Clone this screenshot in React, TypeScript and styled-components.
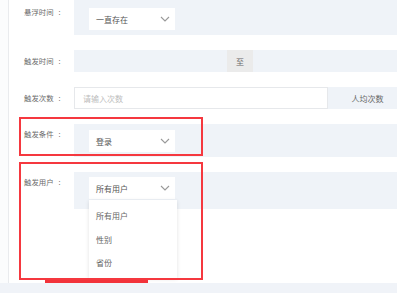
import styled, { createGlobalStyle } from "styled-components";

const Global = createGlobalStyle`
  html, body {
    margin: 0;
    padding: 0;
    background: #f0f3f8;
    overflow: hidden;
  }
  body {
    font-family: "Noto Sans CJK SC", "Noto Sans", sans-serif;
    font-size: 8px;
    color: #666;
  }
`;

const Page = styled.div`
  width: 397px;
  height: 293px;
  display: flex;
  flex-direction: column;
  background: #f0f3f8;
`;

const Frame = styled.div`
  height: 283px;
  display: flex;
  background: #fbfcfd;
`;

const Card = styled.div`
  flex: 1;
  margin-left: 8px;
  border-left: 1px solid #e9ebee;
  background: #fff;
  padding-left: 15px;
  display: flex;
  flex-direction: column;
  gap: 15px;
  position: relative;
`;

const Row = styled.div`
  display: flex;
  align-items: flex-start;
  position: relative;
`;

const Label = styled.div<{ $top?: number; $lh?: number }>`
  width: 50px;
  flex: none;
  margin-top: ${(p) => p.$top ?? 0}px;
  line-height: ${(p) => p.$lh ?? 22}px;
  font-size: 7.4px;
  color: #6b6b6b;
  white-space: nowrap;
`;

const Colon = styled.span`
  padding-left: 5px;
`;

const Block = styled.div<{ $pt: number; $pb: number }>`
  flex: 1;
  background: #eff3f8;
  padding: ${(p) => p.$pt}px 15px ${(p) => p.$pb}px;
`;

const SelectBox = styled.div`
  position: relative;
  width: 86px;
  height: 22px;
  box-sizing: border-box;
  background: #fff;
  display: flex;
  align-items: center;
  justify-content: space-between;
  padding: 0 5px 0 7px;
  color: #555;
  font-size: 8px;
`;

const Menu = styled.div`
  position: absolute;
  left: 0;
  top: 23px;
  width: 88px;
  height: 78px;
  box-sizing: border-box;
  padding-top: 4px;
  background: #fff;
  box-shadow: 0 1px 4px rgba(0, 0, 0, 0.12);
  z-index: 2;
`;

const MenuItem = styled.div`
  height: 23.5px;
  line-height: 23.5px;
  padding-left: 7px;
  color: #666;
  font-size: 8px;
`;

const Range = styled.div`
  flex: 1;
  display: flex;
  height: 22px;
`;

const RangePart = styled.div<{ $w?: number }>`
  background: #eff3f8;
  ${(p) => (p.$w ? `width: ${p.$w}px; flex: none;` : "flex: 1;")}
`;

const Sep = styled.div`
  width: 26px;
  flex: none;
  background: #ebebeb;
  display: flex;
  align-items: center;
  justify-content: center;
  color: #666;
`;

const InputGroup = styled.div`
  flex: 1;
  display: flex;
  height: 22px;
`;

const Input = styled.div`
  width: 254px;
  box-sizing: border-box;
  border: 1px solid #e6e8eb;
  background: #fff;
  display: flex;
  align-items: center;
  padding-left: 8px;
  color: #bdbdbd;
`;

const Addon = styled.div`
  flex: 1;
  background: #eff3f8;
  display: flex;
  align-items: center;
  justify-content: center;
  padding-left: 10px;
  color: #666;
`;

const Mark = styled.div<{ $top: number; $h: number }>`
  position: absolute;
  left: -5px;
  top: ${(p) => p.$top}px;
  width: 184px;
  height: ${(p) => p.$h}px;
  box-sizing: border-box;
  border: 2px solid #f5383f;
  pointer-events: none;
  z-index: 3;
`;

const MarkBar = styled.div`
  position: absolute;
  left: 36px;
  top: 280px;
  width: 103px;
  height: 3px;
  background: #f2323a;
  z-index: 4;
`;

function Chevron() {
  return (
    <svg width="10" height="6" viewBox="0 0 10 6">
      <polyline points="1,1 5,5 9,1" fill="none" stroke="#999" strokeWidth="1.1" />
    </svg>
  );
}

function Select({ value, open }: { value: string; open?: boolean }) {
  return (
    <SelectBox>
      <span>{value}</span>
      <Chevron />
      {open && (
        <Menu>
          <MenuItem>所有用户</MenuItem>
          <MenuItem>性别</MenuItem>
          <MenuItem>省份</MenuItem>
        </Menu>
      )}
    </SelectBox>
  );
}

function FieldLabel({ text, top, lh }: { text: string; top?: number; lh?: number }) {
  return (
    <Label $top={top} $lh={lh}>
      {text}
      <Colon>:</Colon>
    </Label>
  );
}

export default function App() {
  return (
    <>
      <Global />
      <Page>
        <Frame>
          <Card>
            <Row>
              <FieldLabel text="悬浮时间" top={5} lh={14} />
              <Block $pt={8} $pb={5}>
                <Select value="一直存在" />
              </Block>
            </Row>
            <Row>
              <FieldLabel text="触发时间" />
              <Range>
                <RangePart $w={153} />
                <Sep>至</Sep>
                <RangePart />
              </Range>
            </Row>
            <Row>
              <FieldLabel text="触发次数" />
              <InputGroup>
                <Input>请输入次数</Input>
                <Addon>人均次数</Addon>
              </InputGroup>
            </Row>
            <Row>
              <FieldLabel text="触发条件" top={3} lh={14} />
              <Block $pt={6} $pb={5}>
                <Select value="登录" />
              </Block>
              <Mark $top={-7} $h={39} />
            </Row>
            <Row>
              <FieldLabel text="触发用户" top={3} lh={14} />
              <Block $pt={5} $pb={10}>
                <Select value="所有用户" open />
              </Block>
              <Mark $top={-10} $h={118} />
            </Row>
            <MarkBar />
          </Card>
        </Frame>
      </Page>
    </>
  );
}
